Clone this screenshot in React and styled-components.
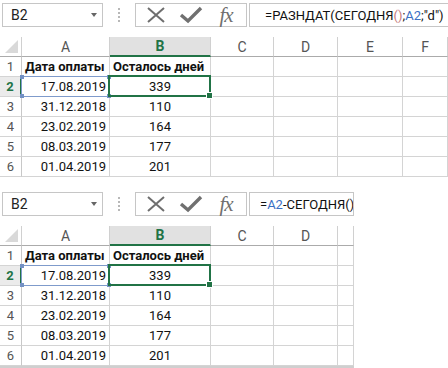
import React from "react";
import styled, { createGlobalStyle } from "styled-components";

const Global = createGlobalStyle`
  html, body { margin: 0; padding: 0; background: #fff; }
  body { font-family: Roboto, "Noto Sans", Arial, sans-serif; }
`;

const GREEN = "#217346";
const GRID = "#d4d4d4";

const Page = styled.div`
  width: 448px;
  height: 368px;
  overflow: hidden;
  display: flex;
  flex-direction: column;
  gap: 12px;
  background: #fff;
`;

const Panel = styled.div`
  width: ${(p) => p.$w}px;
  display: flex;
  flex-direction: column;
  padding-top: 3px;
`;

const FormulaRow = styled.div`
  display: flex;
  align-items: stretch;
  height: 24px;
  margin-bottom: 10px;
`;

const NameBox = styled.div`
  margin-left: 2px;
  width: 101px;
  box-sizing: border-box;
  border: 1px solid #c6c6c6;
  display: flex;
  align-items: center;
  justify-content: space-between;
  padding: 0 5px 0 8px;
  font-size: 14px;
  color: #222;
`;

const Arrow = styled.span`
  width: 0;
  height: 0;
  border-left: 3.5px solid transparent;
  border-right: 3.5px solid transparent;
  border-top: 4px solid #666;
`;

const Grip = styled.div`
  width: 32px;
  display: flex;
  flex-direction: column;
  align-items: center;
  justify-content: center;
  gap: 2px;
  span {
    width: 2px;
    height: 2px;
    background: #b8b8b8;
  }
`;

const Buttons = styled.div`
  width: 112px;
  box-sizing: border-box;
  border: 1px solid #c6c6c6;
  display: flex;
  align-items: center;
  padding-left: 7px;
`;

const IconSlot = styled.div`
  width: ${(p) => p.$w}px;
  display: flex;
  align-items: center;
  justify-content: center;
`;

const Fx = styled.span`
  font-family: "Liberation Serif", "DejaVu Serif", serif;
  font-style: italic;
  font-size: 21px;
  color: #707070;
  letter-spacing: -1px;
  line-height: 1;
`;

const FormulaBox = styled.div`
  flex: 1;
  margin-left: 2px;
  box-sizing: border-box;
  border: 1px solid #c6c6c6;
  border-right: ${(p) => (p.$open ? "none" : "1px solid #c6c6c6")};
  display: flex;
  align-items: center;
  padding-left: ${(p) => p.$pad}px;
  font-size: 13px;
  color: #111;
  white-space: nowrap;
  overflow: hidden;
`;

const Ref = styled.span`
  color: #3a6fc4;
`;

const Paren = styled.span`
  color: #c47a7a;
`;

const Grid = styled.div`
  display: grid;
  grid-template-columns: ${(p) => p.$cols};
  grid-auto-rows: 20px;
  border-bottom: ${(p) => (p.$bottom ? "2px solid #cfcfcf" : "none")};
`;

const Corner = styled.div`
  position: relative;
  box-sizing: border-box;
  border-bottom: 1px solid #ababab;
  border-right: 1px solid #d0d0d0;
  &::after {
    content: "";
    position: absolute;
    right: 3px;
    bottom: 3px;
    width: 0;
    height: 0;
    border-left: 13px solid transparent;
    border-bottom: 13px solid #d9d9d9;
  }
`;

const ColHead = styled.div`
  box-sizing: border-box;
  display: flex;
  align-items: center;
  justify-content: center;
  font-size: 14px;
  background: ${(p) => (p.$sel ? "#e1e1e1" : "#fff")};
  color: ${(p) => (p.$sel ? GREEN : "#555")};
  font-weight: ${(p) => (p.$sel ? 700 : 400)};
  border-right: 1px solid #d0d0d0;
  border-bottom: ${(p) => (p.$sel ? `2px solid ${GREEN}` : "1px solid #ababab")};
`;

const RowHead = styled.div`
  box-sizing: border-box;
  display: flex;
  align-items: center;
  justify-content: center;
  font-size: 13px;
  background: ${(p) => (p.$sel ? "#ebebeb" : "#fff")};
  color: ${(p) => (p.$sel ? GREEN : "#555")};
  font-weight: ${(p) => (p.$sel ? 700 : 400)};
  border-bottom: 1px solid ${GRID};
  border-right: ${(p) => (p.$sel ? `2px solid ${GREEN}` : "1px solid #c8c8c8")};
`;

const Cell = styled.div`
  position: relative;
  box-sizing: border-box;
  display: flex;
  align-items: center;
  justify-content: ${(p) => (p.$align === "right" ? "flex-end" : p.$align === "center" ? "center" : "flex-start")};
  padding: 0 3px;
  font-size: 13px;
  color: #111;
  font-weight: ${(p) => (p.$bold ? 700 : 400)};
  white-space: nowrap;
  border-right: 1px solid ${GRID};
  border-bottom: 1px solid ${GRID};
`;

const RefFrame = styled.div`
  position: absolute;
  z-index: 2;
  left: -1px;
  top: -1px;
  right: -1px;
  bottom: -1px;
  border: 1px solid #7f9bcb;
  pointer-events: none;
  span {
    position: absolute;
    width: 4px;
    height: 4px;
    background: #7391c4;
  }
  span:nth-child(1) { left: -2px; top: -2px; }
  span:nth-child(2) { right: -2px; top: -2px; }
  span:nth-child(3) { left: -2px; bottom: -2px; }
  span:nth-child(4) { right: -2px; bottom: -2px; }
`;

const ActiveFrame = styled.div`
  position: absolute;
  z-index: 3;
  left: -2px;
  top: -2px;
  right: -1px;
  bottom: -1px;
  border: 2px solid ${GREEN};
  pointer-events: none;
  &::after {
    content: "";
    position: absolute;
    right: -4px;
    bottom: -4px;
    width: 5px;
    height: 5px;
    background: ${GREEN};
    border: 1px solid #fff;
  }
`;

const rows = [
  ["17.08.2019", "339"],
  ["31.12.2018", "110"],
  ["23.02.2019", "164"],
  ["08.03.2019", "177"],
  ["01.04.2019", "201"],
];

function CloseIcon() {
  return (
    <svg width="22" height="18" viewBox="0 0 22 18">
      <path d="M3 2 L19 16 M19 2 L3 16" stroke="#6e6e6e" strokeWidth="2" fill="none" />
    </svg>
  );
}

function CheckIcon() {
  return (
    <svg width="24" height="18" viewBox="0 0 24 18">
      <path d="M2 9 L9 15 L22 2" stroke="#707070" strokeWidth="3.4" fill="none" strokeLinejoin="miter" />
    </svg>
  );
}

function Sheet({ width, cols, extra, formula, pad, bottom }) {
  const letters = ["A", "B", "C", "D", "E", "F"].slice(0, cols.length - 1);
  const extraCols = letters.length - 2;
  return (
    <Panel $w={width}>
      <FormulaRow>
        <NameBox>
          B2
          <Arrow />
        </NameBox>
        <Grip>
          <span />
          <span />
          <span />
          <span />
        </Grip>
        <Buttons>
          <IconSlot $w={26}>
            <CloseIcon />
          </IconSlot>
          <IconSlot $w={44}>
            <CheckIcon />
          </IconSlot>
          <IconSlot $w={26}>
            <Fx>fx</Fx>
          </IconSlot>
        </Buttons>
        <FormulaBox $pad={pad} $open={!bottom}>{formula}</FormulaBox>
      </FormulaRow>
      <Grid $cols={cols.map((c) => c + "px").join(" ")} $bottom={bottom}>
        <Corner />
        {letters.map((l) => (
          <ColHead key={l} $sel={l === "B"}>
            {extra && l === letters[letters.length - 1] ? "" : l}
          </ColHead>
        ))}
        <RowHead>1</RowHead>
        <Cell $bold>Дата оплаты</Cell>
        <Cell $bold>Осталось дней</Cell>
        {Array.from({ length: extraCols }).map((_, i) => (
          <Cell key={i} />
        ))}
        {rows.map((r, i) => (
          <React.Fragment key={i}>
            <RowHead $sel={i === 0}>{i + 2}</RowHead>
            <Cell $align="right">
              {r[0]}
              {i === 0 && (
                <RefFrame>
                  <span />
                  <span />
                  <span />
                  <span />
                </RefFrame>
              )}
            </Cell>
            <Cell $align="center">
              {r[1]}
              {i === 0 && <ActiveFrame />}
            </Cell>
            {Array.from({ length: extraCols }).map((_, j) => (
              <Cell key={j} />
            ))}
          </React.Fragment>
        ))}
      </Grid>
    </Panel>
  );
}

export default function App() {
  return (
    <>
      <Global />
      <Page>
        <Sheet
          width={448}
          cols={[22, 88, 101, 63, 64, 65, 45]}
          pad={15}
          formula={
            <>
              =РАЗНДАТ(СЕГОДНЯ<Paren>()</Paren>;<Ref>A2</Ref>;"d")
            </>
          }
        />
        <Sheet
          width={354}
          cols={[22, 88, 101, 63, 64, 16]}
          extra
          pad={10}
          bottom
          formula={
            <>
              =<Ref>A2</Ref>-СЕГОДНЯ()
            </>
          }
        />
      </Page>
    </>
  );
}
